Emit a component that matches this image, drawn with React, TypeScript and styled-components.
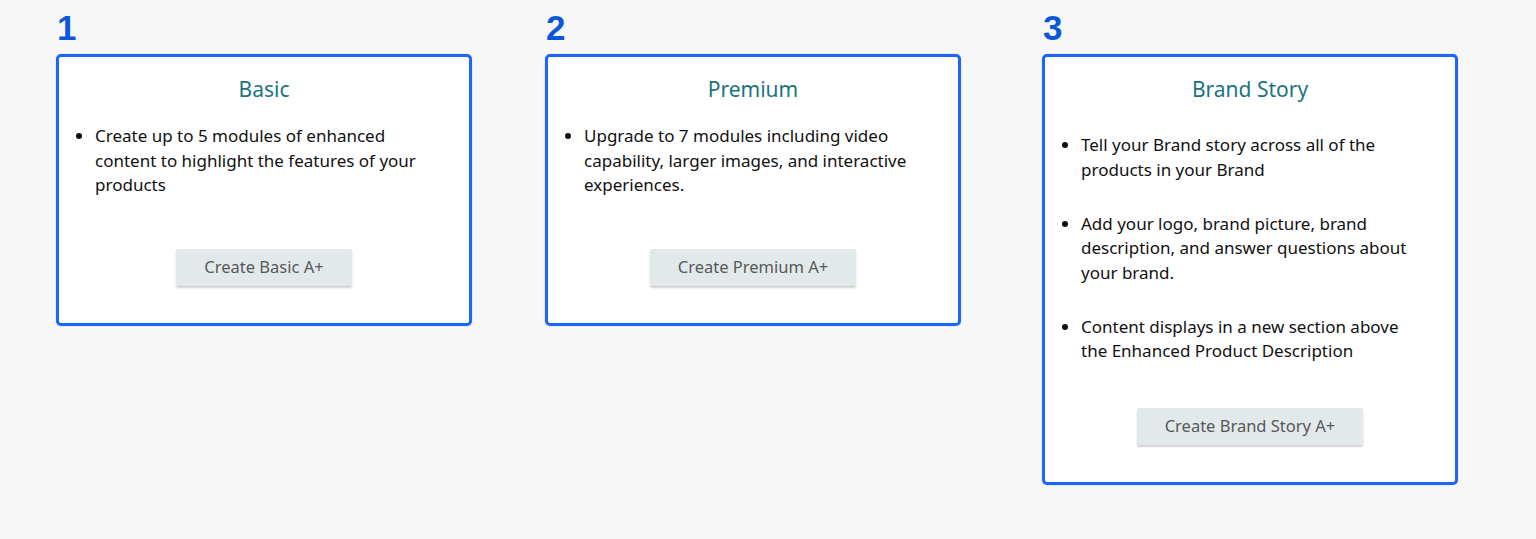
import styled, { createGlobalStyle } from "styled-components";

const GlobalStyle = createGlobalStyle`
  html, body {
    margin: 0;
    padding: 0;
    background: #f7f7f7;
  }
  body {
    font-family: "Noto Sans", Lato, sans-serif;
  }
`;

const Page = styled.div`
  display: grid;
  grid-template-columns: 489px 497px 418px;
  align-items: start;
  padding: 8px 0 0 56px;
  min-height: 539px;
  box-sizing: border-box;
`;

const Column = styled.section`
  display: flex;
  flex-direction: column;
`;

const Step = styled.div`
  font-family: "Liberation Sans", Arial, sans-serif;
  font-weight: bold;
  font-size: 35px;
  line-height: 40px;
  color: #0a58d9;
  padding-left: 1px;
  margin-bottom: 6px;
`;

const Card = styled.div`
  width: 416px;
  box-sizing: border-box;
  background: #fff;
  border: 3px solid #1a66fb;
  border-radius: 5px;
  box-shadow: 0 0 0 1px #ececec;
  display: flex;
  flex-direction: column;
  align-items: center;
  padding: 19px 17px 37px;
`;

const Title = styled.h3`
  margin: 0;
  font-size: 21px;
  line-height: 26px;
  font-weight: 400;
  color: #1c7480;
`;

const Bullets = styled.ul<{ $spaced?: boolean }>`
  align-self: stretch;
  margin: ${(p) => (p.$spaced ? "31px 0 15px" : "22px 0 51px")};
  padding: 0 12px 0 19px;
  li {
    font-size: 17px;
    line-height: 24.5px;
    color: #111;
    margin-bottom: ${(p) => (p.$spaced ? "29.5px" : "0")};
  }
`;

const CreateButton = styled.button`
  font-family: "Noto Sans", Lato, sans-serif;
  font-size: 16.5px;
  line-height: 20px;
  color: #565959;
  background: #e3e9ea;
  border: none;
  border-radius: 2px;
  padding: 8px 28px 9px;
  box-shadow: 0 2px 2px rgba(0, 0, 0, 0.18);
  cursor: pointer;
`;

const plans = [
  {
    step: 1,
    title: "Basic",
    points: [
      "Create up to 5 modules of enhanced content to highlight the features of your products",
    ],
    action: "Create Basic A+",
  },
  {
    step: 2,
    title: "Premium",
    points: [
      "Upgrade to 7 modules including video capability, larger images, and interactive experiences.",
    ],
    action: "Create Premium A+",
  },
  {
    step: 3,
    title: "Brand Story",
    points: [
      "Tell your Brand story across all of the products in your Brand",
      "Add your logo, brand picture, brand description, and answer questions about your brand.",
      "Content displays in a new section above the Enhanced Product Description",
    ],
    action: "Create Brand Story A+",
  },
];

function App() {
  return (
    <>
      <GlobalStyle />
      <Page>
        {plans.map((plan) => (
          <Column key={plan.step}>
            <Step>{plan.step}</Step>
            <Card>
              <Title>{plan.title}</Title>
              <Bullets $spaced={plan.points.length > 1}>
                {plan.points.map((point) => (
                  <li key={point}>{point}</li>
                ))}
              </Bullets>
              <CreateButton>{plan.action}</CreateButton>
            </Card>
          </Column>
        ))}
      </Page>
    </>
  );
}

export default App;
